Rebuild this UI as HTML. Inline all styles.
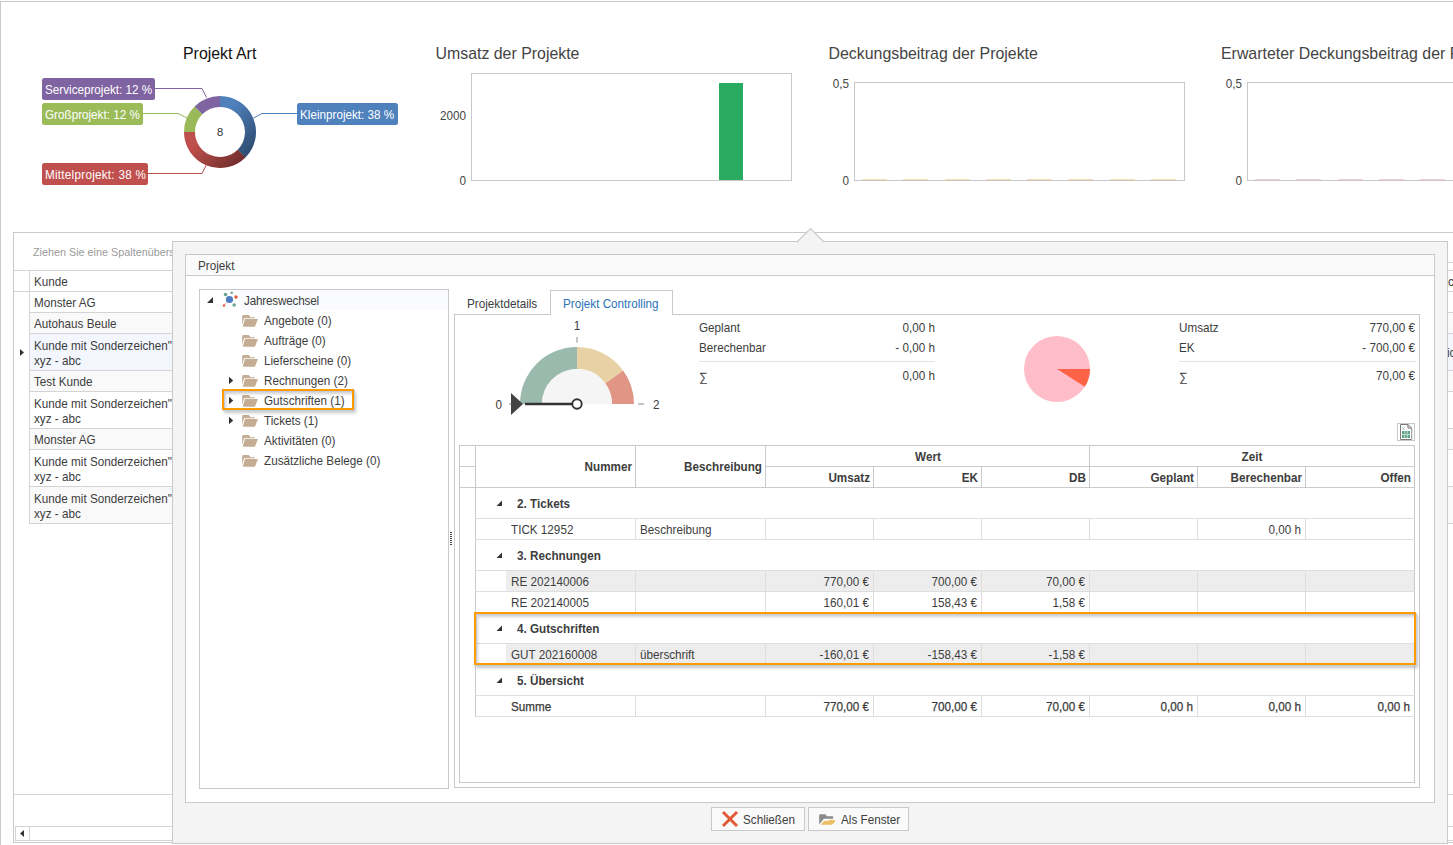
<!DOCTYPE html>
<html><head><meta charset="utf-8"><style>
html,body{margin:0;padding:0;}
body{width:1453px;height:845px;overflow:hidden;position:relative;background:#fff;font-family:"Liberation Sans", sans-serif;}
.a{position:absolute;box-sizing:border-box;}
.t{position:absolute;white-space:nowrap;line-height:20px;}
svg.a{overflow:visible;}
</style></head><body>
<div class="a" style="left:0px;top:1px;width:1460px;height:850px;border-left:1px solid #c9c9c9;border-top:1px solid #c9c9c9"></div>
<div class="t" style="left:183.00px;top:44.09px;font-size:15.9px;color:#111;font-weight:normal;transform-origin:0 50%;">Projekt Art</div>
<svg class="a" style="left:0;top:0" width="420" height="230"><defs><linearGradient id="dg" x1="0" y1="0" x2="1" y2="1"><stop offset="0" stop-color="#fff" stop-opacity="0.06"/><stop offset="0.4" stop-color="#000" stop-opacity="0.0"/><stop offset="1" stop-color="#000" stop-opacity="0.55"/></linearGradient></defs><path d="M220.00,96.00 A36,36 0 0 1 245.46,157.46 L237.68,149.68 A25,25 0 0 0 220.00,107.00 Z" fill="#4f81bd"/><path d="M245.46,157.46 A36,36 0 0 1 184.00,132.00 L195.00,132.00 A25,25 0 0 0 237.68,149.68 Z" fill="#c0504d"/><path d="M184.00,132.00 A36,36 0 0 1 194.54,106.54 L202.32,114.32 A25,25 0 0 0 195.00,132.00 Z" fill="#9bbb59"/><path d="M194.54,106.54 A36,36 0 0 1 220.00,96.00 L220.00,107.00 A25,25 0 0 0 202.32,114.32 Z" fill="#8064a2"/><path d="M184,132 a36,36 0 1 0 72,0 a36,36 0 1 0 -72,0 Z M195,132 a25,25 0 1 0 50,0 a25,25 0 1 0 -50,0 Z" fill="url(#dg)" fill-rule="evenodd"/><polyline points="155,88.5 202,88.5 206.5,97.5" fill="none" stroke="#8064a2" stroke-width="1"/><polyline points="143,113.5 178,113.5 187,118" fill="none" stroke="#9bbb59" stroke-width="1"/><polyline points="148,173.5 202,173.5 206.5,164.5" fill="none" stroke="#c0504d" stroke-width="1"/><polyline points="297,113.5 262,113.5 253.5,118" fill="none" stroke="#4f81bd" stroke-width="1"/><rect x="42" y="78" width="113" height="22" rx="2.5" fill="#8064a2"/><rect x="42" y="103" width="101" height="22" rx="2.5" fill="#9bbb59"/><rect x="42" y="163" width="106" height="22" rx="2.5" fill="#c0504d"/><rect x="297" y="103" width="101" height="22" rx="2.5" fill="#4f81bd"/></svg>
<div class="t" style="left:44.50px;top:79.60px;font-size:12.7px;color:#fff;font-weight:normal;transform:scaleX(0.9213);transform-origin:0 50%;">Serviceprojekt: 12 %</div>
<div class="t" style="left:44.50px;top:104.60px;font-size:12.7px;color:#fff;font-weight:normal;transform:scaleX(0.9213);transform-origin:0 50%;">Großprojekt: 12 %</div>
<div class="t" style="left:44.50px;top:164.60px;font-size:12.7px;color:#fff;font-weight:normal;transform:scaleX(0.9213);transform-origin:0 50%;letter-spacing:0.28px;">Mittelprojekt: 38 %</div>
<div class="t" style="left:300.00px;top:104.60px;font-size:12.7px;color:#fff;font-weight:normal;transform:scaleX(0.9213);transform-origin:0 50%;">Kleinprojekt: 38 %</div>
<div class="t" style="left:20.00px;width:400px;text-align:center;top:122.12px;font-size:11.2px;color:#333;font-weight:normal;transform-origin:50% 50%;">8</div>
<div class="t" style="left:435.50px;top:44.09px;font-size:15.9px;color:#444;font-weight:normal;transform-origin:0 50%;">Umsatz der Projekte</div>
<div class="a" style="left:471px;top:73px;width:321px;height:108px;border:1px solid #c8c8c8;background:transparent;"></div>
<div class="a" style="left:719px;top:83px;width:24px;height:97px;background:#28aa60"></div>
<div class="t" style="left:66.00px;width:400px;text-align:right;top:106.30px;font-size:12.7px;color:#444;font-weight:normal;transform:scaleX(0.9213);transform-origin:100% 50%;">2000</div>
<div class="t" style="left:66.00px;width:400px;text-align:right;top:170.80px;font-size:12.7px;color:#444;font-weight:normal;transform:scaleX(0.9213);transform-origin:100% 50%;">0</div>
<div class="t" style="left:828.50px;top:44.09px;font-size:15.9px;color:#444;font-weight:normal;transform-origin:0 50%;">Deckungsbeitrag der Projekte</div>
<div class="a" style="left:854px;top:82px;width:331px;height:99px;border:1px solid #c8c8c8;background:transparent;"></div>
<div class="t" style="left:449.00px;width:400px;text-align:right;top:74.20px;font-size:12.7px;color:#444;font-weight:normal;transform:scaleX(0.9213);transform-origin:100% 50%;">0,5</div>
<div class="t" style="left:449.00px;width:400px;text-align:right;top:170.80px;font-size:12.7px;color:#444;font-weight:normal;transform:scaleX(0.9213);transform-origin:100% 50%;">0</div>
<div class="a" style="left:862px;top:179px;width:25px;height:1px;background:#f7dcb4"></div>
<div class="a" style="left:903px;top:179px;width:25px;height:1px;background:#f7dcb4"></div>
<div class="a" style="left:945px;top:179px;width:25px;height:1px;background:#f7dcb4"></div>
<div class="a" style="left:986px;top:179px;width:25px;height:1px;background:#f7dcb4"></div>
<div class="a" style="left:1027px;top:179px;width:25px;height:1px;background:#f7dcb4"></div>
<div class="a" style="left:1068px;top:179px;width:25px;height:1px;background:#f7dcb4"></div>
<div class="a" style="left:1110px;top:179px;width:25px;height:1px;background:#f7dcb4"></div>
<div class="a" style="left:1151px;top:179px;width:25px;height:1px;background:#f7dcb4"></div>
<div class="t" style="left:1221.00px;top:44.09px;font-size:15.9px;color:#444;font-weight:normal;transform-origin:0 50%;">Erwarteter Deckungsbeitrag der Projekte</div>
<div class="a" style="left:1247px;top:82px;width:354px;height:99px;border:1px solid #c8c8c8;background:transparent;"></div>
<div class="t" style="left:842.00px;width:400px;text-align:right;top:74.20px;font-size:12.7px;color:#444;font-weight:normal;transform:scaleX(0.9213);transform-origin:100% 50%;">0,5</div>
<div class="t" style="left:842.00px;width:400px;text-align:right;top:170.80px;font-size:12.7px;color:#444;font-weight:normal;transform:scaleX(0.9213);transform-origin:100% 50%;">0</div>
<div class="a" style="left:1255px;top:179px;width:25px;height:1px;background:#f4cfcf"></div>
<div class="a" style="left:1296px;top:179px;width:25px;height:1px;background:#f4cfcf"></div>
<div class="a" style="left:1338px;top:179px;width:25px;height:1px;background:#f4cfcf"></div>
<div class="a" style="left:1379px;top:179px;width:25px;height:1px;background:#f4cfcf"></div>
<div class="a" style="left:1420px;top:179px;width:25px;height:1px;background:#f4cfcf"></div>
<div class="a" style="left:1462px;top:179px;width:25px;height:1px;background:#f4cfcf"></div>
<div class="a" style="left:13px;top:232px;width:1588px;height:611px;border:1px solid #c9c9c9;background:#fff;"></div>
<div class="t" style="left:33.00px;top:242.06px;font-size:10.8px;color:#9a9a9a;font-weight:normal;transform-origin:0 50%;">Ziehen Sie eine Spaltenüberschrift hierher, um nach dieser Spalte zu gruppieren</div>
<div class="a" style="left:13px;top:270px;width:1448px;height:1px;background:#d4d4d4"></div>
<div class="a" style="left:1448px;top:262px;width:13px;height:1px;background:#d4d4d4"></div>
<div class="a" style="left:13px;top:291px;width:1448px;height:1px;background:#d4d4d4"></div>
<div class="a" style="left:30px;top:292px;width:1440px;height:20px;background:#fff"></div>
<div class="a" style="left:29px;top:312px;width:1432px;height:1px;background:#d4d4d4"></div>
<div class="t" style="left:34.00px;top:293.20px;font-size:12.7px;color:#3d3d3d;font-weight:normal;transform:scaleX(0.9213);transform-origin:0 50%;">Monster AG</div>
<div class="a" style="left:30px;top:313px;width:1440px;height:20px;background:#f9f9f9"></div>
<div class="a" style="left:29px;top:333px;width:1432px;height:1px;background:#d4d4d4"></div>
<div class="t" style="left:34.00px;top:314.20px;font-size:12.7px;color:#3d3d3d;font-weight:normal;transform:scaleX(0.9213);transform-origin:0 50%;">Autohaus Beule</div>
<div class="a" style="left:30px;top:334px;width:1440px;height:36px;background:#f3f7fd"></div>
<div class="a" style="left:29px;top:370px;width:1432px;height:1px;background:#d4d4d4"></div>
<div class="t" style="left:34.00px;top:335.50px;font-size:12.7px;color:#3d3d3d;font-weight:normal;transform:scaleX(0.9213);transform-origin:0 50%;">Kunde mit Sonderzeichen"</div>
<div class="t" style="left:34.00px;top:351.10px;font-size:12.7px;color:#3d3d3d;font-weight:normal;transform:scaleX(0.9213);transform-origin:0 50%;">xyz - abc</div>
<div class="a" style="left:30px;top:371px;width:1440px;height:20px;background:#f9f9f9"></div>
<div class="a" style="left:29px;top:391px;width:1432px;height:1px;background:#d4d4d4"></div>
<div class="t" style="left:34.00px;top:372.20px;font-size:12.7px;color:#3d3d3d;font-weight:normal;transform:scaleX(0.9213);transform-origin:0 50%;">Test Kunde</div>
<div class="a" style="left:30px;top:392px;width:1440px;height:36px;background:#fff"></div>
<div class="a" style="left:29px;top:428px;width:1432px;height:1px;background:#d4d4d4"></div>
<div class="t" style="left:34.00px;top:393.50px;font-size:12.7px;color:#3d3d3d;font-weight:normal;transform:scaleX(0.9213);transform-origin:0 50%;">Kunde mit Sonderzeichen"</div>
<div class="t" style="left:34.00px;top:409.10px;font-size:12.7px;color:#3d3d3d;font-weight:normal;transform:scaleX(0.9213);transform-origin:0 50%;">xyz - abc</div>
<div class="a" style="left:30px;top:429px;width:1440px;height:20px;background:#f9f9f9"></div>
<div class="a" style="left:29px;top:449px;width:1432px;height:1px;background:#d4d4d4"></div>
<div class="t" style="left:34.00px;top:430.20px;font-size:12.7px;color:#3d3d3d;font-weight:normal;transform:scaleX(0.9213);transform-origin:0 50%;">Monster AG</div>
<div class="a" style="left:30px;top:450px;width:1440px;height:36px;background:#fff"></div>
<div class="a" style="left:29px;top:486px;width:1432px;height:1px;background:#d4d4d4"></div>
<div class="t" style="left:34.00px;top:451.50px;font-size:12.7px;color:#3d3d3d;font-weight:normal;transform:scaleX(0.9213);transform-origin:0 50%;">Kunde mit Sonderzeichen"</div>
<div class="t" style="left:34.00px;top:467.10px;font-size:12.7px;color:#3d3d3d;font-weight:normal;transform:scaleX(0.9213);transform-origin:0 50%;">xyz - abc</div>
<div class="a" style="left:30px;top:487px;width:1440px;height:36px;background:#f9f9f9"></div>
<div class="a" style="left:29px;top:523px;width:1432px;height:1px;background:#d4d4d4"></div>
<div class="t" style="left:34.00px;top:488.50px;font-size:12.7px;color:#3d3d3d;font-weight:normal;transform:scaleX(0.9213);transform-origin:0 50%;">Kunde mit Sonderzeichen"</div>
<div class="t" style="left:34.00px;top:504.10px;font-size:12.7px;color:#3d3d3d;font-weight:normal;transform:scaleX(0.9213);transform-origin:0 50%;">xyz - abc</div>
<div class="a" style="left:29px;top:270px;width:1px;height:254px;background:#d4d4d4"></div>
<div class="t" style="left:34.00px;top:272.10px;font-size:12.7px;color:#3d3d3d;font-weight:normal;transform:scaleX(0.9213);transform-origin:0 50%;">Kunde</div>
<div class="t" style="left:1447.50px;top:272.10px;font-size:12.7px;color:#3d3d3d;font-weight:normal;transform:scaleX(0.9213);transform-origin:0 50%;">c</div>
<div class="t" style="left:1447.00px;top:342.60px;font-size:12.7px;color:#3d3d3d;font-weight:normal;transform:scaleX(0.9213);transform-origin:0 50%;">ic</div>
<svg class="a" style="left:18px;top:347px" width="8" height="12"><polygon points="2,2 6,5.5 2,9" fill="#333"/></svg>
<div class="a" style="left:13px;top:794px;width:1448px;height:1px;background:#d4d4d4"></div>
<div class="a" style="left:15px;top:826px;width:1586px;height:15px;border:1px solid #d4d4d4;background:#fff;"></div>
<div class="a" style="left:29px;top:826px;width:1px;height:15px;background:#d4d4d4"></div>
<svg class="a" style="left:16px;top:827px" width="12" height="13"><polygon points="8,3 4,6.5 8,10" fill="#333"/></svg>
<div class="a" style="left:172px;top:241px;width:1276px;height:603px;border:1px solid #c9c9c9;background:#f4f4f4;"></div>
<svg class="a" style="left:790px;top:222px" width="40" height="22"><polygon points="7,20.2 20.5,6.7 34,20.2" fill="#f4f4f4"/><polyline points="7,20 20.5,6.5 34,20" fill="none" stroke="#c9c9c9" stroke-width="1.1"/></svg>
<div class="a" style="left:185px;top:254px;width:1250px;height:549px;border:1px solid #c9c9c9;background:#fff;"></div>
<div class="a" style="left:186px;top:255px;width:1248px;height:20px;background:#fafafa"></div>
<div class="a" style="left:186px;top:275px;width:1248px;height:1px;background:#c9c9c9"></div>
<div class="t" style="left:197.50px;top:256.30px;font-size:12.7px;color:#3d3d3d;font-weight:normal;transform:scaleX(0.9213);transform-origin:0 50%;">Projekt</div>
<div class="a" style="left:199px;top:289px;width:250px;height:500px;border:1px solid #c9c9c9;background:#fff;"></div>
<div class="a" style="left:240px;top:290px;width:208px;height:20px;background:#f9fbfe"></div>
<svg class="a" style="left:204px;top:294px" width="12" height="12"><polygon points="9,3 9,9 3,9" fill="#333"/></svg>
<svg class="a" style="left:218px;top:288px" width="22" height="22"><line x1="11.5" y1="11.5" x2="7.5" y2="6.5" stroke="#9cc3b4" stroke-width="0.8"/><line x1="11.5" y1="11.5" x2="6" y2="17.5" stroke="#e8a090" stroke-width="0.8"/><circle cx="11.5" cy="11.5" r="3.6" fill="#4f7cc4"/><circle cx="7.5" cy="6.5" r="1.8" fill="#6aa590"/><circle cx="13.7" cy="4.7" r="1.2" fill="#6aa590"/><circle cx="18" cy="9" r="1.7" fill="#e0593c"/><circle cx="16.2" cy="17" r="1.8" fill="#6aa590"/><circle cx="6" cy="17.5" r="1.2" fill="#e0593c"/></svg>
<div class="t" style="left:244.00px;top:290.90px;font-size:12.7px;color:#3d3d3d;font-weight:normal;transform:scaleX(0.9213);transform-origin:0 50%;letter-spacing:-0.2px;">Jahreswechsel</div>
<div class="t" style="left:264.00px;top:311.00px;font-size:12.7px;color:#3d3d3d;font-weight:normal;transform:scaleX(0.9213);transform-origin:0 50%;">Angebote (0)</div>
<svg class="a" style="left:242px;top:314px" width="18" height="14"><path d="M0.2,2.3 Q0.2,1 1.4,1 L6.8,1 L8.6,3.3 L12.8,3.3 L12.8,5 L2.4,5 L0.2,10.5 Z" fill="#c4ad92"/><path d="M2.1,4.3 L16.6,4.3 L13.4,13 L-0.3,13 Z" fill="#fff"/><path d="M3,5.1 L16,5.1 L12.9,12.7 L0.7,12.7 Z" fill="#c4ad92"/></svg>
<div class="t" style="left:264.00px;top:331.00px;font-size:12.7px;color:#3d3d3d;font-weight:normal;transform:scaleX(0.9213);transform-origin:0 50%;">Aufträge (0)</div>
<svg class="a" style="left:242px;top:334px" width="18" height="14"><path d="M0.2,2.3 Q0.2,1 1.4,1 L6.8,1 L8.6,3.3 L12.8,3.3 L12.8,5 L2.4,5 L0.2,10.5 Z" fill="#c4ad92"/><path d="M2.1,4.3 L16.6,4.3 L13.4,13 L-0.3,13 Z" fill="#fff"/><path d="M3,5.1 L16,5.1 L12.9,12.7 L0.7,12.7 Z" fill="#c4ad92"/></svg>
<div class="t" style="left:264.00px;top:351.00px;font-size:12.7px;color:#3d3d3d;font-weight:normal;transform:scaleX(0.9213);transform-origin:0 50%;">Lieferscheine (0)</div>
<svg class="a" style="left:242px;top:354px" width="18" height="14"><path d="M0.2,2.3 Q0.2,1 1.4,1 L6.8,1 L8.6,3.3 L12.8,3.3 L12.8,5 L2.4,5 L0.2,10.5 Z" fill="#c4ad92"/><path d="M2.1,4.3 L16.6,4.3 L13.4,13 L-0.3,13 Z" fill="#fff"/><path d="M3,5.1 L16,5.1 L12.9,12.7 L0.7,12.7 Z" fill="#c4ad92"/></svg>
<div class="t" style="left:264.00px;top:371.00px;font-size:12.7px;color:#3d3d3d;font-weight:normal;transform:scaleX(0.9213);transform-origin:0 50%;">Rechnungen (2)</div>
<svg class="a" style="left:242px;top:374px" width="18" height="14"><path d="M0.2,2.3 Q0.2,1 1.4,1 L6.8,1 L8.6,3.3 L12.8,3.3 L12.8,5 L2.4,5 L0.2,10.5 Z" fill="#c4ad92"/><path d="M2.1,4.3 L16.6,4.3 L13.4,13 L-0.3,13 Z" fill="#fff"/><path d="M3,5.1 L16,5.1 L12.9,12.7 L0.7,12.7 Z" fill="#c4ad92"/></svg>
<svg class="a" style="left:227px;top:375px" width="8" height="11"><polygon points="2,1.7 6.2,5.5 2,9.3" fill="#333"/></svg>
<div class="t" style="left:264.00px;top:391.00px;font-size:12.7px;color:#3d3d3d;font-weight:normal;transform:scaleX(0.9213);transform-origin:0 50%;">Gutschriften (1)</div>
<svg class="a" style="left:242px;top:394px" width="18" height="14"><path d="M0.2,2.3 Q0.2,1 1.4,1 L6.8,1 L8.6,3.3 L12.8,3.3 L12.8,5 L2.4,5 L0.2,10.5 Z" fill="#c4ad92"/><path d="M2.1,4.3 L16.6,4.3 L13.4,13 L-0.3,13 Z" fill="#fff"/><path d="M3,5.1 L16,5.1 L12.9,12.7 L0.7,12.7 Z" fill="#c4ad92"/></svg>
<svg class="a" style="left:227px;top:395px" width="8" height="11"><polygon points="2,1.7 6.2,5.5 2,9.3" fill="#333"/></svg>
<div class="t" style="left:264.00px;top:411.00px;font-size:12.7px;color:#3d3d3d;font-weight:normal;transform:scaleX(0.9213);transform-origin:0 50%;">Tickets (1)</div>
<svg class="a" style="left:242px;top:414px" width="18" height="14"><path d="M0.2,2.3 Q0.2,1 1.4,1 L6.8,1 L8.6,3.3 L12.8,3.3 L12.8,5 L2.4,5 L0.2,10.5 Z" fill="#c4ad92"/><path d="M2.1,4.3 L16.6,4.3 L13.4,13 L-0.3,13 Z" fill="#fff"/><path d="M3,5.1 L16,5.1 L12.9,12.7 L0.7,12.7 Z" fill="#c4ad92"/></svg>
<svg class="a" style="left:227px;top:415px" width="8" height="11"><polygon points="2,1.7 6.2,5.5 2,9.3" fill="#333"/></svg>
<div class="t" style="left:264.00px;top:431.00px;font-size:12.7px;color:#3d3d3d;font-weight:normal;transform:scaleX(0.9213);transform-origin:0 50%;">Aktivitäten (0)</div>
<svg class="a" style="left:242px;top:434px" width="18" height="14"><path d="M0.2,2.3 Q0.2,1 1.4,1 L6.8,1 L8.6,3.3 L12.8,3.3 L12.8,5 L2.4,5 L0.2,10.5 Z" fill="#c4ad92"/><path d="M2.1,4.3 L16.6,4.3 L13.4,13 L-0.3,13 Z" fill="#fff"/><path d="M3,5.1 L16,5.1 L12.9,12.7 L0.7,12.7 Z" fill="#c4ad92"/></svg>
<div class="t" style="left:264.00px;top:451.00px;font-size:12.7px;color:#3d3d3d;font-weight:normal;transform:scaleX(0.9213);transform-origin:0 50%;">Zusätzliche Belege (0)</div>
<svg class="a" style="left:242px;top:454px" width="18" height="14"><path d="M0.2,2.3 Q0.2,1 1.4,1 L6.8,1 L8.6,3.3 L12.8,3.3 L12.8,5 L2.4,5 L0.2,10.5 Z" fill="#c4ad92"/><path d="M2.1,4.3 L16.6,4.3 L13.4,13 L-0.3,13 Z" fill="#fff"/><path d="M3,5.1 L16,5.1 L12.9,12.7 L0.7,12.7 Z" fill="#c4ad92"/></svg>
<div class="a" style="left:222px;top:389px;width:132px;height:21px;border:2px solid #ff9a00;box-shadow:1px 1px 0 #c4ccd9, 2px 3px 3px rgba(0,0,0,0.22), inset 1px 1px 0 #c4ccd9, inset 2px 3px 3px rgba(0,0,0,0.18)"></div>
<div class="a" style="left:450px;top:532px;width:2px;height:1px;background:#444"></div>
<div class="a" style="left:450px;top:534px;width:2px;height:1px;background:#444"></div>
<div class="a" style="left:450px;top:536px;width:2px;height:1px;background:#444"></div>
<div class="a" style="left:450px;top:538px;width:2px;height:1px;background:#444"></div>
<div class="a" style="left:450px;top:540px;width:2px;height:1px;background:#444"></div>
<div class="a" style="left:450px;top:542px;width:2px;height:1px;background:#444"></div>
<div class="a" style="left:450px;top:544px;width:2px;height:1px;background:#444"></div>
<div class="a" style="left:454px;top:314px;width:966px;height:474px;border:1px solid #c9c9c9;background:#fff;"></div>
<div class="a" style="left:550px;top:290px;width:123px;height:25px;border:1px solid #c9c9c9;border-bottom:none;background:#fff"></div>
<div class="t" style="left:466.50px;top:294.30px;font-size:12.7px;color:#3d3d3d;font-weight:normal;transform:scaleX(0.9213);transform-origin:0 50%;">Projektdetails</div>
<div class="t" style="left:562.50px;top:294.30px;font-size:12.7px;color:#2a72b9;font-weight:normal;transform:scaleX(0.9213);transform-origin:0 50%;">Projekt Controlling</div>
<svg class="a" style="left:480px;top:315px" width="200" height="110"><path d="M97.00,32.00 A57,57 0 0 0 40.00,89.00 L62.00,89.00 A35,35 0 0 1 97.00,54.00 Z" fill="#9bbaae"/><path d="M143.11,55.50 A57,57 0 0 0 97.00,32.00 L97.00,54.00 A35,35 0 0 1 125.32,68.43 Z" fill="#e9d1a6"/><path d="M154.00,89.00 A57,57 0 0 0 143.11,55.50 L125.32,68.43 A35,35 0 0 1 132.00,89.00 Z" fill="#e09585"/><path d="M62,89 A35,35 0 0 1 132,89 Z" fill="#f5f5f5"/><rect x="96" y="22" width="2" height="5.5" fill="#c4c4c4"/><rect x="158" y="88" width="6" height="2" fill="#c4c4c4"/><rect x="29" y="88" width="3" height="2" fill="#c4c4c4"/><line x1="45" y1="89" x2="93" y2="89" stroke="#333" stroke-width="2.3"/><circle cx="97" cy="89" r="4.7" fill="#fff" stroke="#333" stroke-width="1.9"/><polygon points="31,78 43,89 31,100" fill="#444"/></svg>
<div class="t" style="left:377.00px;width:400px;text-align:center;top:315.60px;font-size:12.7px;color:#3d3d3d;font-weight:normal;transform:scaleX(0.9213);transform-origin:50% 50%;">1</div>
<div class="t" style="left:101.50px;width:400px;text-align:right;top:394.60px;font-size:12.7px;color:#3d3d3d;font-weight:normal;transform:scaleX(0.9213);transform-origin:100% 50%;">0</div>
<div class="t" style="left:652.50px;top:394.60px;font-size:12.7px;color:#3d3d3d;font-weight:normal;transform:scaleX(0.9213);transform-origin:0 50%;">2</div>
<div class="t" style="left:699.30px;top:317.60px;font-size:12.7px;color:#3d3d3d;font-weight:normal;transform:scaleX(0.9213);transform-origin:0 50%;">Geplant</div>
<div class="t" style="left:534.50px;width:400px;text-align:right;top:317.60px;font-size:12.7px;color:#3d3d3d;font-weight:normal;transform:scaleX(0.9213);transform-origin:100% 50%;">0,00 h</div>
<div class="t" style="left:699.30px;top:337.60px;font-size:12.7px;color:#3d3d3d;font-weight:normal;transform:scaleX(0.9213);transform-origin:0 50%;">Berechenbar</div>
<div class="t" style="left:534.50px;width:400px;text-align:right;top:337.60px;font-size:12.7px;color:#3d3d3d;font-weight:normal;transform:scaleX(0.9213);transform-origin:100% 50%;">- 0,00 h</div>
<div class="a" style="left:699px;top:361px;width:236px;height:1px;background:#e3e3e3"></div>
<div class="t" style="left:699.00px;top:367.27px;font-size:12.2px;color:#3d3d3d;font-weight:normal;transform-origin:0 50%;">∑</div>
<div class="t" style="left:534.50px;width:400px;text-align:right;top:366.10px;font-size:12.7px;color:#3d3d3d;font-weight:normal;transform:scaleX(0.9213);transform-origin:100% 50%;">0,00 h</div>
<svg class="a" style="left:1020px;top:332px" width="74" height="74"><circle cx="37" cy="37" r="33" fill="#ffbdca"/><path d="M37,37 L70,37 A33,33 0 0 1 64.77,54.83 Z" fill="#ff6347"/></svg>
<div class="t" style="left:1179.00px;top:317.60px;font-size:12.7px;color:#3d3d3d;font-weight:normal;transform:scaleX(0.9213);transform-origin:0 50%;">Umsatz</div>
<div class="t" style="left:1015.00px;width:400px;text-align:right;top:317.60px;font-size:12.7px;color:#3d3d3d;font-weight:normal;transform:scaleX(0.9213);transform-origin:100% 50%;">770,00 €</div>
<div class="t" style="left:1179.00px;top:337.60px;font-size:12.7px;color:#3d3d3d;font-weight:normal;transform:scaleX(0.9213);transform-origin:0 50%;">EK</div>
<div class="t" style="left:1015.00px;width:400px;text-align:right;top:337.60px;font-size:12.7px;color:#3d3d3d;font-weight:normal;transform:scaleX(0.9213);transform-origin:100% 50%;">- 700,00 €</div>
<div class="a" style="left:1179px;top:361px;width:237px;height:1px;background:#e3e3e3"></div>
<div class="t" style="left:1179.00px;top:367.27px;font-size:12.2px;color:#3d3d3d;font-weight:normal;transform-origin:0 50%;">∑</div>
<div class="t" style="left:1015.00px;width:400px;text-align:right;top:366.10px;font-size:12.7px;color:#3d3d3d;font-weight:normal;transform:scaleX(0.9213);transform-origin:100% 50%;">70,00 €</div>
<div class="a" style="left:1397px;top:423px;width:18px;height:18px;border:1px solid #c8c8c8;background:#fff;"></div>
<svg class="a" style="left:1397px;top:423px" width="18" height="18"><path d="M3.5,1.5 L11,1.5 L14.5,5 L14.5,16.5 L3.5,16.5 Z" fill="#fff" stroke="#7a7a7a" stroke-width="1"/><path d="M11,1.5 L11,5 L14.5,5" fill="none" stroke="#6e6e6e" stroke-width="1"/><rect x="14.5" y="5.5" width="1" height="11" fill="#d0d0d0"/><path d="M5.4,4.4 L7.4,6.6 M7.4,4.4 L5.4,6.6" stroke="#6aae92" stroke-width="0.7"/><rect x="5" y="8" width="8" height="7" fill="#62a487"/><path d="M7.7,8 V15 M10.3,8 V15 M5,11.5 H13" stroke="#d8ebe2" stroke-width="0.7"/></svg>
<div class="a" style="left:459px;top:445px;width:956px;height:338px;border:1px solid #c9c9c9;background:#fff;"></div>
<div class="a" style="left:459px;top:466px;width:17px;height:1px;background:#cbcbcb"></div>
<div class="a" style="left:765px;top:466px;width:650px;height:1px;background:#cbcbcb"></div>
<div class="a" style="left:459px;top:487px;width:956px;height:1px;background:#cbcbcb"></div>
<div class="a" style="left:475px;top:445px;width:1px;height:272px;background:#cbcbcb"></div>
<div class="a" style="left:635px;top:445px;width:1px;height:43px;background:#cbcbcb"></div>
<div class="a" style="left:765px;top:445px;width:1px;height:43px;background:#cbcbcb"></div>
<div class="a" style="left:1089px;top:445px;width:1px;height:43px;background:#cbcbcb"></div>
<div class="a" style="left:873px;top:466px;width:1px;height:22px;background:#cbcbcb"></div>
<div class="a" style="left:981px;top:466px;width:1px;height:22px;background:#cbcbcb"></div>
<div class="a" style="left:1197px;top:466px;width:1px;height:22px;background:#cbcbcb"></div>
<div class="a" style="left:1305px;top:466px;width:1px;height:22px;background:#cbcbcb"></div>
<div class="t" style="left:232.00px;width:400px;text-align:right;top:456.60px;font-size:12.7px;color:#3d3d3d;font-weight:bold;transform:scaleX(0.9213);transform-origin:100% 50%;">Nummer</div>
<div class="t" style="left:361.50px;width:400px;text-align:right;top:456.60px;font-size:12.7px;color:#3d3d3d;font-weight:bold;transform:scaleX(0.9213);transform-origin:100% 50%;">Beschreibung</div>
<div class="t" style="left:727.50px;width:400px;text-align:center;top:446.60px;font-size:12.7px;color:#3d3d3d;font-weight:bold;transform:scaleX(0.9213);transform-origin:50% 50%;">Wert</div>
<div class="t" style="left:1051.50px;width:400px;text-align:center;top:446.60px;font-size:12.7px;color:#3d3d3d;font-weight:bold;transform:scaleX(0.9213);transform-origin:50% 50%;">Zeit</div>
<div class="t" style="left:469.50px;width:400px;text-align:right;top:467.60px;font-size:12.7px;color:#3d3d3d;font-weight:bold;transform:scaleX(0.9213);transform-origin:100% 50%;">Umsatz</div>
<div class="t" style="left:577.50px;width:400px;text-align:right;top:467.60px;font-size:12.7px;color:#3d3d3d;font-weight:bold;transform:scaleX(0.9213);transform-origin:100% 50%;">EK</div>
<div class="t" style="left:685.50px;width:400px;text-align:right;top:467.60px;font-size:12.7px;color:#3d3d3d;font-weight:bold;transform:scaleX(0.9213);transform-origin:100% 50%;">DB</div>
<div class="t" style="left:793.50px;width:400px;text-align:right;top:467.60px;font-size:12.7px;color:#3d3d3d;font-weight:bold;transform:scaleX(0.9213);transform-origin:100% 50%;">Geplant</div>
<div class="t" style="left:901.50px;width:400px;text-align:right;top:467.60px;font-size:12.7px;color:#3d3d3d;font-weight:bold;transform:scaleX(0.9213);transform-origin:100% 50%;">Berechenbar</div>
<div class="t" style="left:1010.50px;width:400px;text-align:right;top:467.60px;font-size:12.7px;color:#3d3d3d;font-weight:bold;transform:scaleX(0.9213);transform-origin:100% 50%;">Offen</div>
<div class="a" style="left:475px;top:518px;width:940px;height:1px;background:#dedede"></div>
<svg class="a" style="left:494px;top:498px" width="10" height="10"><polygon points="8,2.5 8,8 2.5,8" fill="#333"/></svg>
<div class="t" style="left:517.40px;top:494.20px;font-size:12.7px;color:#3d3d3d;font-weight:bold;transform:scaleX(0.9213);transform-origin:0 50%;">2. Tickets</div>
<div class="a" style="left:475px;top:539px;width:940px;height:1px;background:#dedede"></div>
<div class="a" style="left:635px;top:519px;width:1px;height:21px;background:#dedede"></div>
<div class="a" style="left:765px;top:519px;width:1px;height:21px;background:#dedede"></div>
<div class="a" style="left:873px;top:519px;width:1px;height:21px;background:#dedede"></div>
<div class="a" style="left:981px;top:519px;width:1px;height:21px;background:#dedede"></div>
<div class="a" style="left:1089px;top:519px;width:1px;height:21px;background:#dedede"></div>
<div class="a" style="left:1197px;top:519px;width:1px;height:21px;background:#dedede"></div>
<div class="a" style="left:1305px;top:519px;width:1px;height:21px;background:#dedede"></div>
<div class="t" style="left:510.60px;top:519.50px;font-size:12.7px;color:#3d3d3d;font-weight:normal;transform:scaleX(0.9213);transform-origin:0 50%;">TICK 12952</div>
<div class="t" style="left:640.20px;top:519.50px;font-size:12.7px;color:#3d3d3d;font-weight:normal;transform:scaleX(0.9213);transform-origin:0 50%;">Beschreibung</div>
<div class="t" style="left:901.00px;width:400px;text-align:right;top:519.50px;font-size:12.7px;color:#3d3d3d;font-weight:normal;transform:scaleX(0.9213);transform-origin:100% 50%;">0,00 h</div>
<div class="a" style="left:475px;top:570px;width:940px;height:1px;background:#dedede"></div>
<svg class="a" style="left:494px;top:550px" width="10" height="10"><polygon points="8,2.5 8,8 2.5,8" fill="#333"/></svg>
<div class="t" style="left:517.40px;top:546.20px;font-size:12.7px;color:#3d3d3d;font-weight:bold;transform:scaleX(0.9213);transform-origin:0 50%;">3. Rechnungen</div>
<div class="a" style="left:506px;top:571px;width:908px;height:20px;background:#ededed"></div>
<div class="a" style="left:475px;top:591px;width:940px;height:1px;background:#dedede"></div>
<div class="a" style="left:635px;top:571px;width:1px;height:21px;background:#dedede"></div>
<div class="a" style="left:765px;top:571px;width:1px;height:21px;background:#dedede"></div>
<div class="a" style="left:873px;top:571px;width:1px;height:21px;background:#dedede"></div>
<div class="a" style="left:981px;top:571px;width:1px;height:21px;background:#dedede"></div>
<div class="a" style="left:1089px;top:571px;width:1px;height:21px;background:#dedede"></div>
<div class="a" style="left:1197px;top:571px;width:1px;height:21px;background:#dedede"></div>
<div class="a" style="left:1305px;top:571px;width:1px;height:21px;background:#dedede"></div>
<div class="t" style="left:510.60px;top:571.50px;font-size:12.7px;color:#3d3d3d;font-weight:normal;transform:scaleX(0.9213);transform-origin:0 50%;">RE 202140006</div>
<div class="t" style="left:469.00px;width:400px;text-align:right;top:571.50px;font-size:12.7px;color:#3d3d3d;font-weight:normal;transform:scaleX(0.9213);transform-origin:100% 50%;">770,00 €</div>
<div class="t" style="left:577.00px;width:400px;text-align:right;top:571.50px;font-size:12.7px;color:#3d3d3d;font-weight:normal;transform:scaleX(0.9213);transform-origin:100% 50%;">700,00 €</div>
<div class="t" style="left:685.00px;width:400px;text-align:right;top:571.50px;font-size:12.7px;color:#3d3d3d;font-weight:normal;transform:scaleX(0.9213);transform-origin:100% 50%;">70,00 €</div>
<div class="a" style="left:475px;top:612px;width:940px;height:1px;background:#dedede"></div>
<div class="a" style="left:635px;top:592px;width:1px;height:21px;background:#dedede"></div>
<div class="a" style="left:765px;top:592px;width:1px;height:21px;background:#dedede"></div>
<div class="a" style="left:873px;top:592px;width:1px;height:21px;background:#dedede"></div>
<div class="a" style="left:981px;top:592px;width:1px;height:21px;background:#dedede"></div>
<div class="a" style="left:1089px;top:592px;width:1px;height:21px;background:#dedede"></div>
<div class="a" style="left:1197px;top:592px;width:1px;height:21px;background:#dedede"></div>
<div class="a" style="left:1305px;top:592px;width:1px;height:21px;background:#dedede"></div>
<div class="t" style="left:510.60px;top:592.50px;font-size:12.7px;color:#3d3d3d;font-weight:normal;transform:scaleX(0.9213);transform-origin:0 50%;">RE 202140005</div>
<div class="t" style="left:469.00px;width:400px;text-align:right;top:592.50px;font-size:12.7px;color:#3d3d3d;font-weight:normal;transform:scaleX(0.9213);transform-origin:100% 50%;">160,01 €</div>
<div class="t" style="left:577.00px;width:400px;text-align:right;top:592.50px;font-size:12.7px;color:#3d3d3d;font-weight:normal;transform:scaleX(0.9213);transform-origin:100% 50%;">158,43 €</div>
<div class="t" style="left:685.00px;width:400px;text-align:right;top:592.50px;font-size:12.7px;color:#3d3d3d;font-weight:normal;transform:scaleX(0.9213);transform-origin:100% 50%;">1,58 €</div>
<div class="a" style="left:475px;top:643px;width:940px;height:1px;background:#dedede"></div>
<svg class="a" style="left:494px;top:623px" width="10" height="10"><polygon points="8,2.5 8,8 2.5,8" fill="#333"/></svg>
<div class="t" style="left:517.40px;top:619.20px;font-size:12.7px;color:#3d3d3d;font-weight:bold;transform:scaleX(0.9213);transform-origin:0 50%;">4. Gutschriften</div>
<div class="a" style="left:506px;top:644px;width:908px;height:20px;background:#ededed"></div>
<div class="a" style="left:475px;top:664px;width:940px;height:1px;background:#dedede"></div>
<div class="a" style="left:635px;top:644px;width:1px;height:21px;background:#dedede"></div>
<div class="a" style="left:765px;top:644px;width:1px;height:21px;background:#dedede"></div>
<div class="a" style="left:873px;top:644px;width:1px;height:21px;background:#dedede"></div>
<div class="a" style="left:981px;top:644px;width:1px;height:21px;background:#dedede"></div>
<div class="a" style="left:1089px;top:644px;width:1px;height:21px;background:#dedede"></div>
<div class="a" style="left:1197px;top:644px;width:1px;height:21px;background:#dedede"></div>
<div class="a" style="left:1305px;top:644px;width:1px;height:21px;background:#dedede"></div>
<div class="t" style="left:510.60px;top:644.50px;font-size:12.7px;color:#3d3d3d;font-weight:normal;transform:scaleX(0.9213);transform-origin:0 50%;">GUT 202160008</div>
<div class="t" style="left:640.20px;top:644.50px;font-size:12.7px;color:#3d3d3d;font-weight:normal;transform:scaleX(0.9213);transform-origin:0 50%;">überschrift</div>
<div class="t" style="left:469.00px;width:400px;text-align:right;top:644.50px;font-size:12.7px;color:#3d3d3d;font-weight:normal;transform:scaleX(0.9213);transform-origin:100% 50%;">-160,01 €</div>
<div class="t" style="left:577.00px;width:400px;text-align:right;top:644.50px;font-size:12.7px;color:#3d3d3d;font-weight:normal;transform:scaleX(0.9213);transform-origin:100% 50%;">-158,43 €</div>
<div class="t" style="left:685.00px;width:400px;text-align:right;top:644.50px;font-size:12.7px;color:#3d3d3d;font-weight:normal;transform:scaleX(0.9213);transform-origin:100% 50%;">-1,58 €</div>
<div class="a" style="left:475px;top:695px;width:940px;height:1px;background:#dedede"></div>
<svg class="a" style="left:494px;top:675px" width="10" height="10"><polygon points="8,2.5 8,8 2.5,8" fill="#333"/></svg>
<div class="t" style="left:517.40px;top:671.20px;font-size:12.7px;color:#3d3d3d;font-weight:bold;transform:scaleX(0.9213);transform-origin:0 50%;">5. Übersicht</div>
<div class="a" style="left:475px;top:716px;width:940px;height:1px;background:#dedede"></div>
<div class="a" style="left:635px;top:696px;width:1px;height:21px;background:#dedede"></div>
<div class="a" style="left:765px;top:696px;width:1px;height:21px;background:#dedede"></div>
<div class="a" style="left:873px;top:696px;width:1px;height:21px;background:#dedede"></div>
<div class="a" style="left:981px;top:696px;width:1px;height:21px;background:#dedede"></div>
<div class="a" style="left:1089px;top:696px;width:1px;height:21px;background:#dedede"></div>
<div class="a" style="left:1197px;top:696px;width:1px;height:21px;background:#dedede"></div>
<div class="a" style="left:1305px;top:696px;width:1px;height:21px;background:#dedede"></div>
<div class="t" style="left:510.60px;top:696.50px;font-size:12.7px;color:#3d3d3d;font-weight:normal;transform:scaleX(0.9213);transform-origin:0 50%;-webkit-text-stroke:0.25px #333;">Summe</div>
<div class="t" style="left:469.00px;width:400px;text-align:right;top:696.50px;font-size:12.7px;color:#3d3d3d;font-weight:normal;transform:scaleX(0.9213);transform-origin:100% 50%;-webkit-text-stroke:0.25px #333;">770,00 €</div>
<div class="t" style="left:577.00px;width:400px;text-align:right;top:696.50px;font-size:12.7px;color:#3d3d3d;font-weight:normal;transform:scaleX(0.9213);transform-origin:100% 50%;-webkit-text-stroke:0.25px #333;">700,00 €</div>
<div class="t" style="left:685.00px;width:400px;text-align:right;top:696.50px;font-size:12.7px;color:#3d3d3d;font-weight:normal;transform:scaleX(0.9213);transform-origin:100% 50%;-webkit-text-stroke:0.25px #333;">70,00 €</div>
<div class="t" style="left:793.00px;width:400px;text-align:right;top:696.50px;font-size:12.7px;color:#3d3d3d;font-weight:normal;transform:scaleX(0.9213);transform-origin:100% 50%;-webkit-text-stroke:0.25px #333;">0,00 h</div>
<div class="t" style="left:901.00px;width:400px;text-align:right;top:696.50px;font-size:12.7px;color:#3d3d3d;font-weight:normal;transform:scaleX(0.9213);transform-origin:100% 50%;-webkit-text-stroke:0.25px #333;">0,00 h</div>
<div class="t" style="left:1010.00px;width:400px;text-align:right;top:696.50px;font-size:12.7px;color:#3d3d3d;font-weight:normal;transform:scaleX(0.9213);transform-origin:100% 50%;-webkit-text-stroke:0.25px #333;">0,00 h</div>
<div class="a" style="left:474px;top:612px;width:942px;height:53px;border:2px solid #ff9a00;box-shadow:1px 1px 0 #c4ccd9, 2px 3px 3px rgba(0,0,0,0.22), inset 1px 1px 0 #c4ccd9, inset 2px 3px 3px rgba(0,0,0,0.18)"></div>
<div class="a" style="left:711px;top:807px;width:94px;height:24px;border:1px solid #c8c8c8;background:#fafafa;"></div>
<svg class="a" style="left:720px;top:809px" width="20" height="20"><path d="M4,4 L16,16 M16,4 L4,16" stroke="#e05a35" stroke-width="2.9" stroke-linecap="square"/></svg>
<div class="t" style="left:743.00px;top:809.60px;font-size:12.7px;color:#3d3d3d;font-weight:normal;transform:scaleX(0.9213);transform-origin:0 50%;">Schließen</div>
<div class="a" style="left:808px;top:807px;width:101px;height:24px;border:1px solid #c8c8c8;background:#fafafa;"></div>
<svg class="a" style="left:812px;top:806px" width="30" height="26"><path d="M7.2,9.4 Q7.2,8.2 8.4,8.2 L13.4,8.2 L14.9,10.2 L20.3,10.2 Q21.2,10.2 21.2,11.1 L21.2,12.7 L11.8,12.7 L7.2,18.4 Z" fill="#8a8a8a"/><path d="M7.6,19.4 L11.3,13.9 L15.8,13.9 L16.5,13.1 L22.6,13.1 L24.6,15.2 L20.4,19.4 Z" fill="#fafafa"/><path d="M8.9,18.8 L12,15 L16.3,15 L17,14.1 L22.2,14.1 L23.5,15.3 L20,18.8 Z" fill="#ebbf62"/></svg>
<div class="t" style="left:841.00px;top:809.60px;font-size:12.7px;color:#3d3d3d;font-weight:normal;transform:scaleX(0.9213);transform-origin:0 50%;">Als Fenster</div>
</body></html>
